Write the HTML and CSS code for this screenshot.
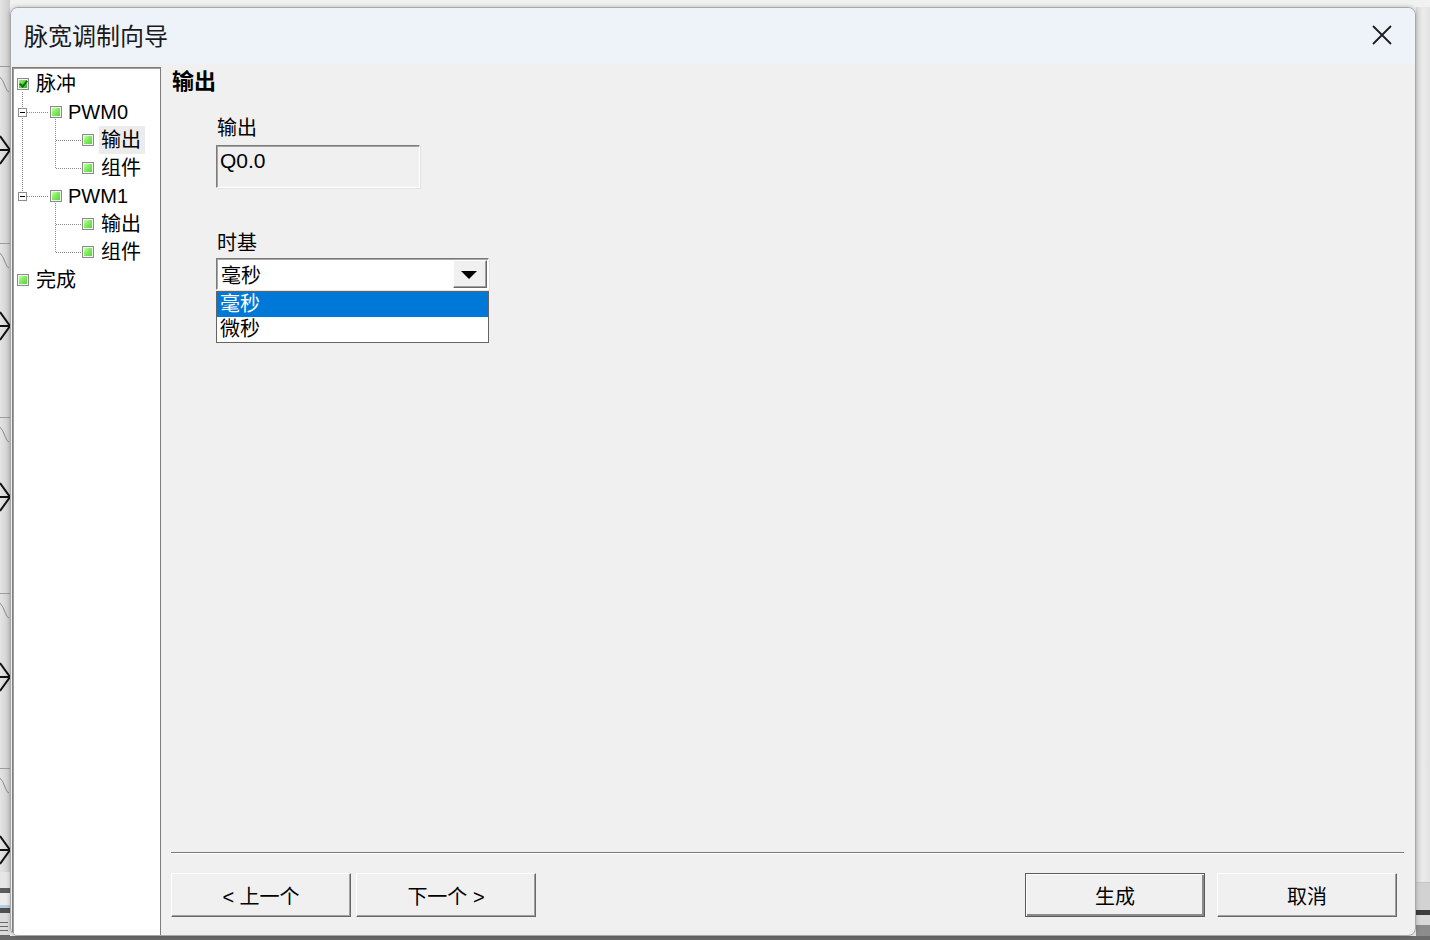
FILE: index.html
```html
<!DOCTYPE html>
<html lang="zh-CN">
<head>
  <meta charset="UTF-8">
  <title>脉宽调制向导</title>
  <link rel="stylesheet" href="styles.css">
</head>
<body>
  <!-- Editor behind the dialog: network rungs on the left -->
  <div class="side-left">
    <svg width="10" height="940" viewBox="0 0 10 940">
      <defs>
        <linearGradient id="rail" x1="0" y1="0" x2="1" y2="0">
          <stop offset="0" stop-color="#e4e4e4"/>
          <stop offset="1" stop-color="#cdcdcd"/>
        </linearGradient>
      </defs>
      <rect width="10" height="940" fill="url(#rail)"/>
      <g stroke="#9c9c9c" stroke-width="1">
        <line x1="0" y1="66.5" x2="10" y2="66.5"/>
        <line x1="0" y1="243.5" x2="10" y2="243.5"/>
        <line x1="0" y1="417.5" x2="10" y2="417.5"/>
        <line x1="0" y1="593.5" x2="10" y2="593.5"/>
        <line x1="0" y1="768.5" x2="10" y2="768.5"/>
      </g>
      <g fill="none" stroke="#8c8c8c" stroke-width="1">
        <path d="M0 77 Q3 80 5 86 T9 92"/>
        <path d="M0 253 Q3 256 5 262 T9 268"/>
        <path d="M0 427 Q3 430 5 436 T9 442"/>
        <path d="M0 603 Q3 606 5 612 T9 618"/>
        <path d="M0 778 Q3 781 5 787 T9 793"/>
      </g>
      <g fill="none" stroke="#111" stroke-width="2">
        <path d="M0 136 L10 150 L0 164 M0 150 H10"/>
        <path d="M0 312 L10 326 L0 340 M0 326 H10"/>
        <path d="M0 483 L10 497 L0 511 M0 497 H10"/>
        <path d="M0 663 L10 677 L0 691 M0 677 H10"/>
        <path d="M0 836 L10 850 L0 864 M0 850 H10"/>
      </g>
      <rect y="872" width="10" height="16" fill="#e6e6e6"/>
      <rect y="888" width="10" height="5" fill="#5d5d5d"/>
      <rect y="893" width="10" height="12" fill="#ececec"/>
      <rect y="905" width="10" height="3" fill="#b4cce6"/>
      <rect y="908" width="10" height="5" fill="#505050"/>
      <rect y="913" width="10" height="27" fill="#dcdcdc"/>
      <g stroke="#6a6a6a" stroke-width="1">
        <line x1="0" y1="922.5" x2="8" y2="922.5"/>
        <line x1="0" y1="926.5" x2="8" y2="926.5"/>
        <line x1="0" y1="930.5" x2="8" y2="930.5"/>
      </g>
      <rect y="935" width="10" height="5" fill="#6b6b6b"/>
    </svg>
  </div>

  <div class="dialog">
    <div class="titlebar">
      <span class="title">脉宽调制向导</span>
      <button class="close" title="关闭">
        <svg width="20" height="20" viewBox="0 0 20 20">
          <path d="M1 1 L19 19 M19 1 L1 19" stroke="#1c1c1c" stroke-width="1.8" fill="none"/>
        </svg>
      </button>
    </div>

    <div class="dialog-body">
      <!-- Wizard steps -->
      <div class="tree">
        <svg class="tree-lines" width="146" height="200" viewBox="0 0 146 200">
          <g stroke="#8c8c8c" stroke-width="1" stroke-dasharray="1 1" fill="none">
            <path d="M9.5 24 V128"/>
            <path d="M14 44.5 H36 M14 128.5 H36"/>
            <path d="M42.5 51 V100.5 M43 72.5 H68 M43 100.5 H68"/>
            <path d="M42.5 135 V184.5 M43 156.5 H68 M43 184.5 H68"/>
          </g>
          <g fill="#fff" stroke="#8c8c8c" stroke-width="1">
            <rect x="5.5" y="40.5" width="8" height="8"/>
            <rect x="5.5" y="124.5" width="8" height="8"/>
          </g>
          <g stroke="#000" stroke-width="1">
            <path d="M7 44.5 H12 M7 128.5 H12"/>
          </g>
        </svg>

        <div class="node lvl0"><span class="node-icon checked"></span><span class="label">脉冲</span></div>
        <div class="node lvl1"><span class="node-icon"></span><span class="label">PWM0</span></div>
        <div class="node lvl2"><span class="node-icon"></span><span class="label current">输出</span></div>
        <div class="node lvl2"><span class="node-icon"></span><span class="label">组件</span></div>
        <div class="node lvl1"><span class="node-icon"></span><span class="label">PWM1</span></div>
        <div class="node lvl2"><span class="node-icon"></span><span class="label">输出</span></div>
        <div class="node lvl2"><span class="node-icon"></span><span class="label">组件</span></div>
        <div class="node lvl0"><span class="node-icon"></span><span class="label">完成</span></div>
      </div>

      <!-- Current step -->
      <div class="page">
        <h2 class="page-title">输出</h2>

        <div class="form">
          <label class="field-label">输出</label>
          <div class="textbox">Q0.0</div>

          <label class="field-label gap">时基</label>
          <div class="combo">
            <div class="combo-box">
              <span>毫秒</span>
              <span class="combo-btn">
                <svg width="16" height="8" viewBox="0 0 16 8"><path d="M0 0 H16 L8 8 Z" fill="#000"/></svg>
              </span>
            </div>
            <ul class="combo-list">
              <li class="selected">毫秒</li>
              <li>微秒</li>
            </ul>
          </div>
        </div>

        <div class="separator"></div>

        <div class="actions">
          <button class="btn">&lt; 上一个</button>
          <button class="btn">下一个 &gt;</button>
          <span class="spacer"></span>
          <button class="btn default">生成</button>
          <button class="btn">取消</button>
        </div>
      </div>
    </div>
  </div>

  <!-- Editor behind the dialog: right edge -->
  <div class="side-right">
    <svg width="14" height="933" viewBox="0 0 14 933">
      <defs>
        <linearGradient id="edge" x1="0" y1="0" x2="1" y2="0">
          <stop offset="0" stop-color="#d9d9d9"/>
          <stop offset="0.5" stop-color="#ebebeb"/>
          <stop offset="1" stop-color="#e2e2e2"/>
        </linearGradient>
      </defs>
      <rect width="14" height="933" fill="url(#edge)"/>
      <rect y="875" width="14" height="28" fill="#d2d2d2"/>
      <line x1="0" y1="875.5" x2="14" y2="875.5" stroke="#c4c4c4"/>
      <rect y="903" width="14" height="5" fill="#3c3c3c"/>
      <rect y="908" width="14" height="10" fill="#d8d8d8"/>
      <rect y="918" width="14" height="15" fill="#8c8c8c"/>
      <rect y="929" width="14" height="4" fill="#6b6b6b"/>
    </svg>
  </div>

  <div class="taskbar"></div>
</body>
</html>
```

FILE: styles.css
```css
* {
  box-sizing: border-box;
}

body {
  margin: 0;
  width: 1430px;
  height: 940px;
  overflow: hidden;
  display: grid;
  grid-template-columns: 10px 1406px 14px;
  grid-template-rows: 7px 929px 4px;
  background: #f1f1f1;
  font-family: "Liberation Sans", "Noto Sans CJK SC", sans-serif;
  color: #000;
}

.side-left {
  grid-column: 1;
  grid-row: 1 / 4;
}

.side-right {
  grid-column: 3;
  grid-row: 2 / 4;
}

.side-left svg,
.side-right svg {
  display: block;
}

.taskbar {
  grid-column: 2;
  grid-row: 3;
  background: #6b6b6b;
}

/* Dialog window */
.dialog {
  grid-column: 2;
  grid-row: 2;
  display: flex;
  flex-direction: column;
  background: #f0f0f0;
  border: 1px solid #a8a8a8;
  border-radius: 8px;
  overflow: hidden;
  box-shadow: 0 0 4px rgba(0, 0, 0, 0.25);
  position: relative;
  z-index: 1;
}

.titlebar {
  height: 56px;
  flex: none;
  display: flex;
  align-items: center;
  justify-content: space-between;
  padding-left: 13px;
  background: #eef3fa;
}

.title {
  font-family: "Noto Sans CJK SC", sans-serif;
  font-size: 24px;
  line-height: 1;
  color: #1a1a1a;
  margin-top: -2px;
}

.close {
  width: 20px;
  height: 20px;
  padding: 0;
  margin: -2px 23px 0 0;
  border: none;
  background: none;
}

.close svg {
  display: block;
}

.dialog-body {
  flex: 1;
  min-height: 0;
  display: flex;
}

/* Step tree */
.tree {
  width: 149px;
  flex: none;
  margin: 3px 0 0 1px;
  padding-top: 2px;
  background: #fff;
  border: 1px solid #7c7c7c;
  border-bottom: none;
  box-shadow: inset 1px 1px 0 #a0a0a0;
  position: relative;
  font-size: 20px;
}

.tree-lines {
  position: absolute;
  top: 0;
  left: 0;
}

.node {
  position: relative;
  display: flex;
  align-items: center;
  height: 28px;
  line-height: 28px;
}

.node.lvl0 { padding-left: 4px; }
.node.lvl1 { padding-left: 37px; }
.node.lvl2 { padding-left: 69px; }

.node-icon {
  width: 12px;
  height: 12px;
  flex: none;
  position: relative;
  border: 1px solid #8a8a8a;
  background: linear-gradient(135deg, #e0ffd0 0%, #8cf066 40%, #4ccc38 100%);
  box-shadow: inset 0 0 0 1px #eefbe8;
}

.node-icon.checked {
  background: linear-gradient(135deg, #a8f488 0%, #52cc3e 60%, #34aa26 100%);
}

.node-icon.checked::after {
  content: "";
  position: absolute;
  left: 3px;
  top: 0;
  width: 3px;
  height: 6px;
  border-right: 2px solid #176d17;
  border-bottom: 2px solid #176d17;
  transform: rotate(40deg);
}

.label {
  margin-left: 5px;
  padding: 0 4px 0 2px;
}

.node.lvl1 .label {
  margin-left: 4px;
}

.label.current {
  background: #ececec;
}

/* Step page */
.page {
  flex: 1;
  display: flex;
  flex-direction: column;
  padding: 0 11px 18px 10px;
}

.page-title {
  margin: 0 0 0 1px;
  font-family: "Noto Sans CJK SC", sans-serif;
  font-size: 22px;
  font-weight: 700;
  line-height: 30px;
}

.form {
  display: flex;
  flex-direction: column;
  align-items: flex-start;
  margin: 21px 0 0 45px;
  font-size: 20px;
}

.field-label {
  line-height: 26px;
  margin-left: 1px;
}

.field-label.gap {
  margin-top: 42px;
}

.textbox {
  width: 204px;
  height: 43px;
  margin-top: 4px;
  padding: 2px 0 0 3px;
  line-height: 26px;
  font-size: 21px;
  background: #f0f0f0;
  border: 1px solid;
  border-color: #7a7a7a #fff #fff #7a7a7a;
  box-shadow: inset 1px 1px 0 #a6a6a6, 1px 1px 0 #e3e3e3;
}

.combo {
  position: relative;
  width: 273px;
  margin-top: 2px;
}

.combo-box {
  height: 32px;
  display: flex;
  align-items: center;
  padding: 0 1px 0 4px;
  background: #fff;
  border: 1px solid;
  border-color: #7a7a7a #fff #fff #7a7a7a;
  box-shadow: inset 1px 1px 0 #a6a6a6, 1px 1px 0 #e3e3e3;
}

.combo-btn {
  width: 34px;
  height: 28px;
  margin-left: auto;
  display: flex;
  align-items: center;
  justify-content: center;
  background: #f0f0f0;
  border: 1px solid;
  border-color: #fff #696969 #696969 #fff;
  box-shadow: inset -1px -1px 0 #a0a0a0;
}

.combo-btn svg {
  display: block;
  margin: 1px 2px 0 0;
}

.combo-list {
  position: absolute;
  top: 33px;
  left: 0;
  width: 273px;
  margin: 0;
  padding: 0;
  list-style: none;
  background: #fff;
  border: 1px solid #646464;
}

.combo-list li {
  height: 25px;
  line-height: 25px;
  padding-left: 3px;
}

.combo-list li.selected {
  background: #0078d7;
  color: #fff;
}

.separator {
  margin-top: auto;
  height: 2px;
  border-top: 1px solid #7a7a7a;
  border-bottom: 1px solid #fff;
}

.actions {
  display: flex;
  gap: 5px;
  margin-top: 19px;
  padding-right: 7px;
}

.spacer {
  flex: 1;
}

.btn {
  width: 180px;
  height: 44px;
  padding: 0;
  font-family: inherit;
  font-size: 20px;
  color: #000;
  background: #f0f0f0;
  border: 1px solid;
  border-color: #fff #696969 #696969 #fff;
  box-shadow: inset -1px -1px 0 #a0a0a0;
}

.btn.default {
  margin-right: 7px;
  border-color: #5a5a5a;
  box-shadow: inset 1px 1px 0 #fff, inset -2px -2px 0 #8a8a8a;
}
```
